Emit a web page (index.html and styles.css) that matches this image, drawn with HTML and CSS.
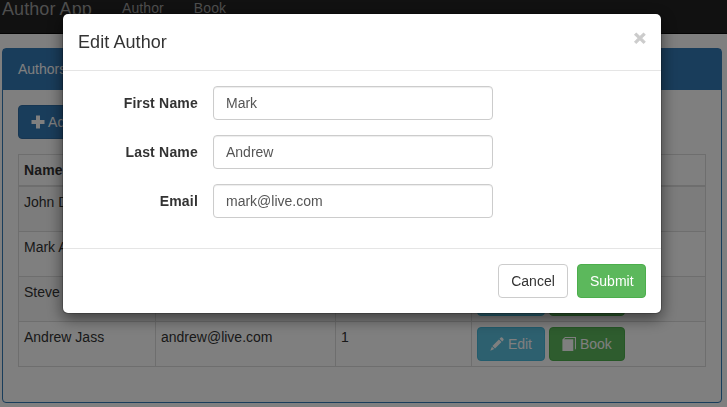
FILE: index.html
```html
<!DOCTYPE html>
<html lang="en">
<head>
<meta charset="utf-8">
<title>Author App</title>
<link rel="stylesheet" href="styles.css">
</head>
<body>
<nav class="navbar">
  <div class="navbar-inner">
    <a class="brand">Author App</a>
    <a class="nav-link">Author</a>
    <a class="nav-link">Book</a>
  </div>
</nav>
<main class="panel">
  <div class="panel-heading">Authors</div>
  <div class="panel-body">
    <button class="btn btn-primary"><svg class="icon" viewBox="0 0 14 14"><path d="M5 .5h4V5h4.500v4H9v4.500H5V9H.5V5H5z"/></svg> Add</button>
    <table class="table">
      <colgroup><col class="col-name"><col class="col-email"><col class="col-books"><col></colgroup>
      <thead><tr><th>Name</th><th></th><th></th><th></th></tr></thead>
      <tbody>
        <tr><td>John Doe</td><td></td><td></td><td></td></tr>
        <tr><td>Mark Andrew</td><td></td><td></td><td></td></tr>
        <tr><td>Steve</td><td></td><td></td><td><div class="actions"><button class="btn btn-info"><svg class="icon" viewBox="0 0 14 14"><path d="M10.800.6q.7-.6 1.400 0l1.200 1.200q.6.700 0 1.400l-1.200 1.200L9.600 1.800zM8.900 2.500l2.600 2.600L5 11.600 2.400 9zM1.900 9.700l2.400 2.400L.3 13.700z"/></svg> Edit</button><button class="btn btn-success"><svg class="icon" viewBox="0 0 14 14"><path d="M3 0h11v11.500L12.900 13V1.100H3.300L2 2.300h9.300V14H.4V2.600z"/></svg> Book</button></div></td></tr>
        <tr><td>Andrew Jass</td><td>andrew@live.com</td><td>1</td><td><div class="actions"><button class="btn btn-info"><svg class="icon" viewBox="0 0 14 14"><path d="M10.800.6q.7-.6 1.400 0l1.200 1.200q.6.700 0 1.400l-1.200 1.200L9.600 1.800zM8.900 2.500l2.600 2.600L5 11.600 2.400 9zM1.900 9.700l2.400 2.400L.3 13.700z"/></svg> Edit</button><button class="btn btn-success"><svg class="icon" viewBox="0 0 14 14"><path d="M3 0h11v11.500L12.900 13V1.100H3.300L2 2.300h9.300V14H.4V2.600z"/></svg> Book</button></div></td></tr>
      </tbody>
    </table>
  </div>
</main>
<div class="backdrop">
  <div class="modal" role="dialog">
    <div class="modal-header"><h4>Edit Author</h4><button class="close">×</button></div>
    <form class="modal-body">
      <label for="first">First Name</label><input id="first" value="Mark">
      <label for="last">Last Name</label><input id="last" value="Andrew">
      <label for="email">Email</label><input id="email" value="mark@live.com">
    </form>
    <div class="modal-footer"><button class="btn btn-default">Cancel</button><button class="btn btn-success btn-submit">Submit</button></div>
  </div>
</div>
</body>
</html>
```
FILE: styles.css
```css
* { box-sizing: border-box; }
body {
  margin: 0;
  height: 407px;
  overflow: hidden;
  background: #fff;
  color: #333;
  font: 14px/20px "Liberation Sans", Arial, sans-serif;
}
.navbar {
  height: 34px;
  background: #222;
  border-bottom: 1px solid #080808;
}
.navbar-inner { display: flex; padding-left: 2px; color: #9d9d9d; line-height: 18px; }
.brand { width: 105px; font-size: 18px; letter-spacing: .08px; }
.nav-link { padding: 0 15px; letter-spacing: .1px; line-height: 16px; }
.panel {
  width: 720px;
  margin: 14px 0 0 2px;
  border: 1px solid #337ab7;
  border-radius: 4px;
}
.panel-heading {
  padding: 10px 15px;
  background: #337ab7;
  border-bottom: 1px solid #337ab7;
  color: #fff;
}
.panel-body { padding: 15px 15px 35px; }
.btn {
  display: block;
  height: 34px;
  padding: 6px 12px;
  border: 1px solid;
  border-radius: 4px;
  color: #fff;
  font: inherit;
  white-space: nowrap;
}
.btn-primary { background: #337ab7; border-color: #2e6da4; }
.btn-info { background: #5bc0de; border-color: #46b8da; }
.btn-success { background: #5cb85c; border-color: #4cae4c; }
.btn-default { width: 70px; background: #fff; border-color: #ccc; color: #333; }
.btn-submit { width: 69px; }
.icon { width: 14px; height: 14px; fill: currentColor; vertical-align: -2px; }
.table {
  width: 688px;
  margin-top: 15px;
  border-collapse: collapse;
  table-layout: fixed;
}
.col-name { width: 137px; }
.col-email { width: 180px; }
.col-books { width: 136px; }
th, td { padding: 5px; border: 1px solid #ddd; text-align: left; vertical-align: top; }
th { height: 31px; padding-bottom: 4px; border-bottom-width: 2px; letter-spacing: .15px; }
td { height: 45px; }
tbody tr:first-child td { height: 46px; }
tbody tr:nth-child(odd) { background: #f9f9f9; }
.actions { display: flex; gap: 4px; }
.backdrop {
  position: fixed;
  inset: 0;
  padding: 13px 0 0 62px;
  background: rgba(0, 0, 0, .5);
}
.modal {
  width: 600px;
  background: #fff;
  background-clip: padding-box;
  border: 1px solid rgba(0, 0, 0, .2);
  border-radius: 6px;
  box-shadow: 0 5px 15px rgba(0, 0, 0, .5);
}
.modal-header {
  display: flex;
  justify-content: space-between;
  align-items: flex-start;
  height: 57px;
  padding: 15px;
  border-bottom: 1px solid #e5e5e5;
}
h4 { margin: 0; font-size: 18px; font-weight: 500; line-height: 26px; letter-spacing: .08px; }
.close {
  margin-top: -2px;
  padding: 0;
  border: 0;
  background: none;
  color: #000;
  font: bold 21px/21px "Liberation Sans", Arial, sans-serif;
  -webkit-text-stroke: 1px #000;
  opacity: .2;
}
.modal-body {
  display: grid;
  grid-template-columns: 120px 280px;
  gap: 15px;
  padding: 15px 15px 30px;
}
label { padding-top: 7px; font-weight: bold; text-align: right; letter-spacing: .2px; }
input {
  width: 280px;
  height: 34px;
  padding: 6px 12px;
  border: 1px solid #ccc;
  border-radius: 4px;
  box-shadow: inset 0 1px 1px rgba(0, 0, 0, .075);
  color: #555;
  font: inherit;
}
.modal-footer {
  display: flex;
  justify-content: flex-end;
  gap: 9px;
  padding: 15px;
  border-top: 1px solid #e5e5e5;
}
```
